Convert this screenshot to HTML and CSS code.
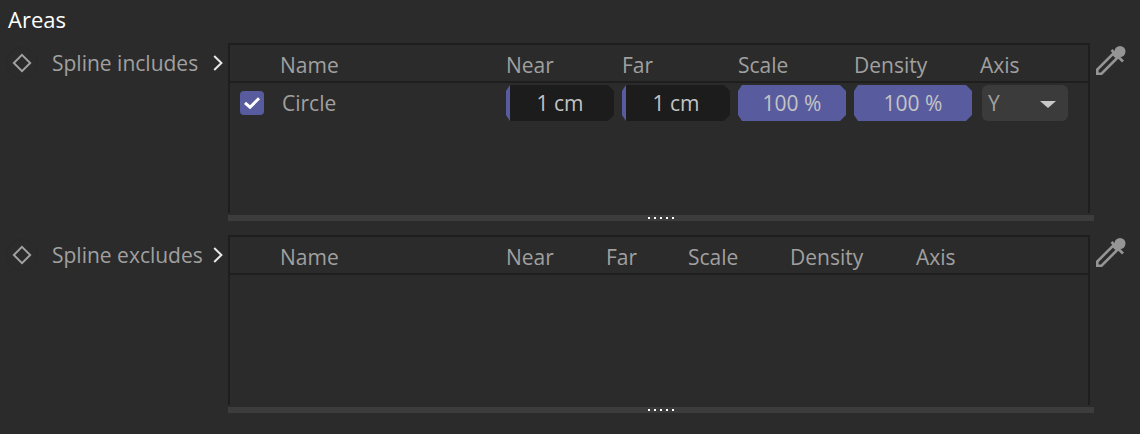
FILE: index.html
```html
<!DOCTYPE html>
<html lang="en">
<head>
<meta charset="utf-8">
<title>Areas</title>
<link rel="stylesheet" href="styles.css">
</head>
<body>
<h1 class="title">Areas</h1>
<section class="area">
  <div class="label">
    <span class="key"><svg width="20" height="20" viewBox="0 0 20 20"><path d="M10 1.800 18.200 10 10 18.200 1.800 10Z" fill="none" stroke="#a3a3a3" stroke-width="1.900"/></svg></span>
    <span class="label-text">Spline includes</span>
    <svg class="chev" width="10" height="16" viewBox="0 0 10 16"><path d="M1.200 1 8.400 8 1.200 15" fill="none" stroke="#e8e8e8" stroke-width="2"/></svg>
  </div>
  <div class="table-wrap">
    <div class="table">
      <div class="head head-a">
        <span>Name</span><span>Near</span><span>Far</span><span>Scale</span><span>Density</span><span>Axis</span>
      </div>
      <div class="row">
        <span class="check"><svg width="18" height="14" viewBox="0 0 18 14"><path d="M2 6.800 7 11.200 16 2.300" fill="none" stroke="#fff" stroke-width="3"/></svg></span>
        <span class="row-name">Circle</span>
        <span class="field field-dark">1 cm</span>
        <span class="field field-dark">1 cm</span>
        <span class="field field-fill">100 %</span>
        <span class="field field-fill field-wide">100 %</span>
        <span class="select">Y<i class="caret"></i></span>
      </div>
    </div>
    <div class="grip"><i></i><i></i><i></i><i></i><i></i></div>
  </div>
  <svg class="dropper" width="30" height="30" viewBox="0 0 30 30"><path d="M1.300 28.700V24.500L17 8.800 21.200 13 5.500 28.700Z" fill="none" stroke="#959595" stroke-width="2.600"/><path d="M15.500 5 27 16.500" stroke="#959595" stroke-width="2.600"/><circle cx="24" cy="6.500" r="5.500" fill="#959595"/><path d="M19 5 25.500 12 21 12 18 8Z" fill="#959595"/></svg>
</section>
<section class="area">
  <div class="label">
    <span class="key"><svg width="20" height="20" viewBox="0 0 20 20"><path d="M10 1.800 18.200 10 10 18.200 1.800 10Z" fill="none" stroke="#a3a3a3" stroke-width="1.900"/></svg></span>
    <span class="label-text">Spline excludes</span>
    <svg class="chev" width="10" height="16" viewBox="0 0 10 16"><path d="M1.200 1 8.400 8 1.200 15" fill="none" stroke="#e8e8e8" stroke-width="2"/></svg>
  </div>
  <div class="table-wrap">
    <div class="table">
      <div class="head head-b">
        <span>Name</span><span>Near</span><span>Far</span><span>Scale</span><span>Density</span><span>Axis</span>
      </div>
    </div>
    <div class="grip"><i></i><i></i><i></i><i></i><i></i></div>
  </div>
  <svg class="dropper" width="30" height="30" viewBox="0 0 30 30"><path d="M1.300 28.700V24.500L17 8.800 21.200 13 5.500 28.700Z" fill="none" stroke="#959595" stroke-width="2.600"/><path d="M15.500 5 27 16.500" stroke="#959595" stroke-width="2.600"/><circle cx="24" cy="6.500" r="5.500" fill="#959595"/><path d="M19 5 25.500 12 21 12 18 8Z" fill="#959595"/></svg>
</section>
</body>
</html>
```
FILE: styles.css
```css
* { box-sizing: border-box; }
html, body { margin: 0; }
body {
  width: 1140px;
  height: 434px;
  overflow: hidden;
  background: #2b2b2b;
  color: #a0a0a0;
  font-family: "Open Sans", "Noto Sans", sans-serif;
  font-size: 21px;
  line-height: 28px;
}
.title {
  margin: 0;
  padding: 5px 0 0 8px;
  height: 43px;
  font-size: 22px;
  font-weight: 400;
  line-height: 28px;
  color: #fff;
}
.area {
  display: flex;
  align-items: flex-start;
  height: 192px;
}
.label {
  display: flex;
  align-items: center;
  flex: none;
  width: 228px;
  height: 40px;
}
.key {
  display: flex;
  align-items: center;
  justify-content: center;
  width: 32px;
  height: 32px;
  margin-left: 6px;
  margin-right: 14px;
  border: 1px solid #292929;
  border-radius: 50%;
}
.label-text { width: 161px; white-space: nowrap; }
.chev { flex: none; }
.table-wrap { width: 866px; flex: none; }
.table {
  width: 862px;
  height: 170px;
  border: solid #1e1e1e;
  border-width: 2px 2px 0;
}
.head {
  display: grid;
  height: 38px;
  padding-top: 3px;
  padding-left: 50px;
  border-bottom: 2px solid #1e1e1e;
  align-items: center;
}
.head-a { grid-template-columns: 226px 116px 116px 116px 126px 80px; }
.head-b { grid-template-columns: 226px 100px 82px 102px 126px 60px; }
.row {
  display: flex;
  align-items: center;
  height: 36px;
  margin-top: 2px;
  padding-left: 10px;
}
.check {
  display: flex;
  align-items: center;
  justify-content: center;
  width: 24px;
  height: 24px;
  margin-right: 18px;
  border-radius: 4px;
  background: #585c9f;
}
.row-name { width: 224px; }
.field {
  height: 36px;
  width: 108px;
  margin-right: 8px;
  text-align: center;
  line-height: 36px;
  color: #c4c4c4;
  clip-path: polygon(4px 0, calc(100% - 6px) 0, 100% 6px, 100% calc(100% - 6px), calc(100% - 6px) 100%, 4px 100%, 0 calc(100% - 6px), 0 6px);
}
.field-dark {
  background: linear-gradient(to right, #585c9f 4px, #1c1c1c 4px);
}
.field-fill { background: #585c9f; }
.field-wide { width: 118px; margin-right: 10px; }
.select {
  position: relative;
  width: 86px;
  height: 36px;
  padding-left: 6px;
  line-height: 36px;
  border-radius: 6px;
  background: #3b3b3b;
  color: #a0a0a0;
}
.caret {
  position: absolute;
  right: 12px;
  top: 16px;
  border: solid transparent;
  border-width: 7px 8px 0;
  border-top-color: #c8c8c8;
}
.grip {
  display: flex;
  justify-content: center;
  gap: 4px;
  align-items: center;
  height: 6px;
  margin-top: 2px;
  background: #3c3c3c;
}
.grip i {
  width: 2px;
  height: 2px;
  background: #fff;
}
.dropper { margin: 2px 0 0 2px; flex: none; }
```
